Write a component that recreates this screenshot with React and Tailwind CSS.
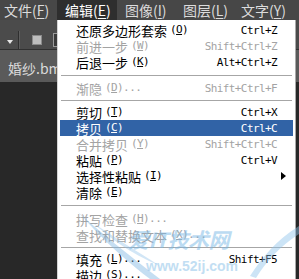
import React from "react";

const CJK = { fontFamily: '"Noto Sans CJK SC", "Noto Sans", sans-serif' };

function Mn({ ch }) {
  return (
    <span className="font-['DejaVu_Sans_Mono',monospace] text-[11px] tracking-[-0.6px] ml-[3px]">
      (<span className="underline underline-offset-[1px]">{ch}</span>)
    </span>
  );
}

function Item({ label, ch, dots, sc, disabled, active, arrow }) {
  const color = active ? "text-white" : disabled ? "text-[#a3a3a3]" : "text-black";
  return (
    <div
      className={`h-[16px] mx-[2px] flex items-center pl-[16px] pr-[16px] ${
        active ? "bg-[#3163a6]" : ""
      } ${color}`}
    >
      <span className="text-[13px] leading-none font-['Noto_Sans_CJK_SC',sans-serif]">{label}</span>
      <Mn ch={ch} />
      {dots ? (
        <span className="font-['DejaVu_Sans_Mono',monospace] text-[11px] tracking-[-0.6px]">...</span>
      ) : null}
      <span className="flex-1" />
      {sc ? (
        <span className="font-['DejaVu_Sans_Mono',monospace] text-[11px] tracking-[-0.6px] leading-none">
          {sc}
        </span>
      ) : null}
      {arrow ? (
        <svg width="5" height="8" viewBox="0 0 5 8" className="mr-[-9px]">
          <path d="M0 0 L5 4 L0 8 Z" fill="#000" />
        </svg>
      ) : null}
    </div>
  );
}

function Sep({ h }) {
  return (
    <div className={`${h} mx-[3px] flex items-center`}>
      <div className="h-px w-full bg-[#a6a6a6]" />
    </div>
  );
}

function Top({ label, ch, active, w }) {
  return (
    <div
      className={`h-[20px] flex items-center ${w} ${
        active ? "bg-[#2e2e2e] text-white" : "text-[#dcdcdc]"
      }`}
    >
      <span className="text-[14px] leading-none font-['Noto_Sans_CJK_SC',sans-serif]">
        {label}(<span className="underline underline-offset-[2px]">{ch}</span>)
      </span>
    </div>
  );
}

export default function App() {
  return (
    <div className="relative w-[299px] h-[279px] overflow-hidden bg-[#282828]" style={CJK}>
      {/* menu bar */}
      <div className="h-[20px] bg-[#474747] flex">
        <Top label="文件" ch="F" w="w-[57px] pl-[4px]" />
        <Top label="编辑" ch="E" active w="w-[60px] pl-[8px]" />
        <Top label="图像" ch="I" w="w-[58px] pl-[8px]" />
        <Top label="图层" ch="L" w="w-[58px] pl-[8px]" />
        <Top label="文字" ch="Y" w="w-[58px] pl-[8px]" />
      </div>
      {/* options bar */}
      <div className="h-[29px] bg-[#4b4b4b] flex items-end pb-[3px] pl-[7px]">
        <svg width="6" height="4" viewBox="0 0 6 4" className="mb-[2px]">
          <path d="M0 0 L6 0 L3 4 Z" fill="#e6e6e6" />
        </svg>
        <div className="w-px h-[18px] bg-[#2f2f2f] ml-[5px] mb-[-3px]" />
        <div className="w-px h-[18px] bg-[#5e5e5e] mb-[-3px]" />
        <div className="w-[10px] h-[10px] bg-[#bdbdbd] border border-[#8a8a8a] ml-[12px] mb-[1px]" />
        <div className="w-[10px] h-[14px] border border-[#9a9a9a] bg-[#3a3a3a] ml-[11px] mb-[-1px]" />
      </div>
      {/* tab bar */}
      <div className="h-px bg-[#303030]" />
      <div className="h-[32px] bg-[#5a5a5a] flex items-center pl-[8px] pt-[4px]">
        <span className="text-[14px] text-[#dadada] leading-none">婚纱.bmp @ 66.7%</span>
      </div>

      {/* dropdown menu */}
      <div className="absolute left-[57px] top-[20px] w-[239px] h-[270px] bg-white border-l border-[#d4d4d4] border-r border-r-[#a9a9a9] pt-[2px]">
        <Item label="还原多边形套索" ch="O" sc="Ctrl+Z" />
        <Item label="前进一步" ch="W" sc="Shift+Ctrl+Z" disabled />
        <Item label="后退一步" ch="K" sc="Alt+Ctrl+Z" />
        <Sep h="h-[10px]" />
        <Item label="渐隐" ch="D" dots sc="Shift+Ctrl+F" disabled />
        <Sep h="h-[8px]" />
        <Item label="剪切" ch="T" sc="Ctrl+X" />
        <Item label="拷贝" ch="C" sc="Ctrl+C" active />
        <Item label="合并拷贝" ch="Y" sc="Shift+Ctrl+C" disabled />
        <Item label="粘贴" ch="P" sc="Ctrl+V" />
        <Item label="选择性粘贴" ch="I" arrow />
        <Item label="清除" ch="E" />
        <Sep h="h-[11px]" />
        <Item label="拼写检查" ch="H" dots disabled />
        <Item label="查找和替换文本" ch="X" dots disabled />
        <Sep h="h-[8px]" />
        <Item label="填充" ch="L" dots sc="Shift+F5" />
        <Item label="描边" ch="S" dots />
      </div>

      {/* watermark */}
      <svg
        className="absolute left-0 top-0 pointer-events-none"
        width="299"
        height="279"
        viewBox="0 0 299 279"
      >
        <path d="M78 212 C95 230 112 250 150 279 L160 279 C125 252 100 232 78 212 Z" fill="#7fb6e3" opacity="0.45" />
        <path d="M92 222 C110 238 128 252 160 266 C135 250 112 236 92 222 Z" fill="#8fc1e8" opacity="0.4" />
        <path d="M250 276 C262 258 276 240 299 226 L299 234 C280 246 266 262 256 278 Z" fill="#8ec3ea" opacity="0.45" />
      </svg>
      <div className="absolute left-[128px] top-[229px] text-[21px] font-bold italic leading-none text-[#7ab8e6] opacity-50 pointer-events-none tracking-[-0.5px]">
        爱IT技术网
      </div>
      <div className="absolute left-[146px] top-[259px] text-[14px] font-bold leading-none text-[#86bfe8] opacity-50 pointer-events-none font-['Liberation_Sans',sans-serif]">
        www.52ij.com
      </div>
    </div>
  );
}
